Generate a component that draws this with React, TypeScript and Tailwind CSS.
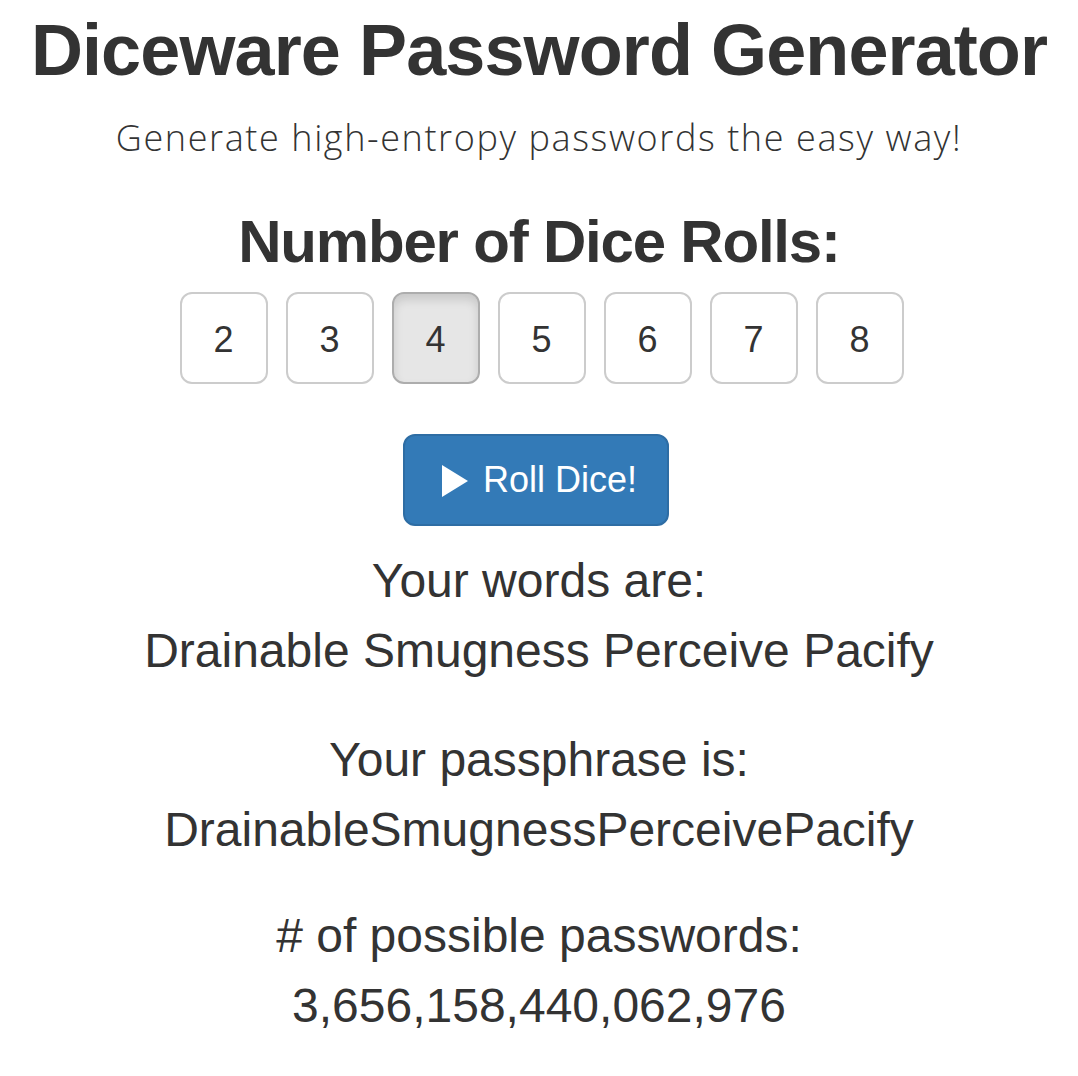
import { useState } from "react";

const ROLLS = [2, 3, 4, 5, 6, 7, 8];
const WORDS = ["Drainable", "Smugness", "Perceive", "Pacify"];

export default function App() {
  const [rolls, setRolls] = useState(4);
  const possible = BigInt(7776) ** BigInt(rolls);

  return (
    <div
      className="flex min-h-screen flex-col items-center bg-white text-center text-[#333333]"
      style={{ fontFamily: '"Liberation Sans", Arial, sans-serif' }}
    >
      <h1 className="text-[72px] leading-[100px] font-bold tracking-[-0.9px]">
        Diceware Password Generator
      </h1>
      <p
        className="text-[36px] leading-[76px] font-light tracking-[1.6px]"
        style={{ fontFamily: '"Open Sans", Roboto, sans-serif' }}
      >
        Generate high-entropy passwords the easy way!
      </p>

      <h2 className="mt-[31px] text-[60px] leading-[70px] font-bold tracking-[-1.2px]">
        Number of Dice Rolls:
      </h2>

      <div className="mt-[15px] ml-[5px] flex gap-[18px]">
        {ROLLS.map((n) => (
          <button
            key={n}
            onClick={() => setRolls(n)}
            className={
              n === rolls
                ? "h-[92px] w-[88px] rounded-[12px] border-2 border-[#adadad] bg-[#e6e6e6] pt-[3px] text-[36px] shadow-[inset_0_6px_10px_rgba(0,0,0,0.125)]"
                : "h-[92px] w-[88px] rounded-[12px] border-2 border-[#cccccc] bg-white pt-[3px] text-[36px]"
            }
          >
            {n}
          </button>
        ))}
      </div>

      <button className="mt-[50px] mr-[7px] flex h-[92px] w-[266px] items-center justify-center gap-[15px] rounded-[12px] border-2 border-[#2e6da4] bg-[#337ab7] pl-[8px] text-[36px] text-white">
        <svg width="26" height="32" viewBox="0 0 26 32" className="mt-[1px]">
          <path d="M0 0 L26 16 L0 32 Z" fill="#ffffff" />
        </svg>
        <span>Roll Dice!</span>
      </button>

      <div className="mt-[20px] text-[48px] leading-[70px]">
        <p>Your words are:</p>
        <p>{WORDS.join(" ")}</p>
        <p className="mt-[39px]">Your passphrase is:</p>
        <p>{WORDS.join("")}</p>
        <p className="mt-[36px]"># of possible passwords:</p>
        <p>{possible.toLocaleString("en-US")}</p>
      </div>
    </div>
  );
}
